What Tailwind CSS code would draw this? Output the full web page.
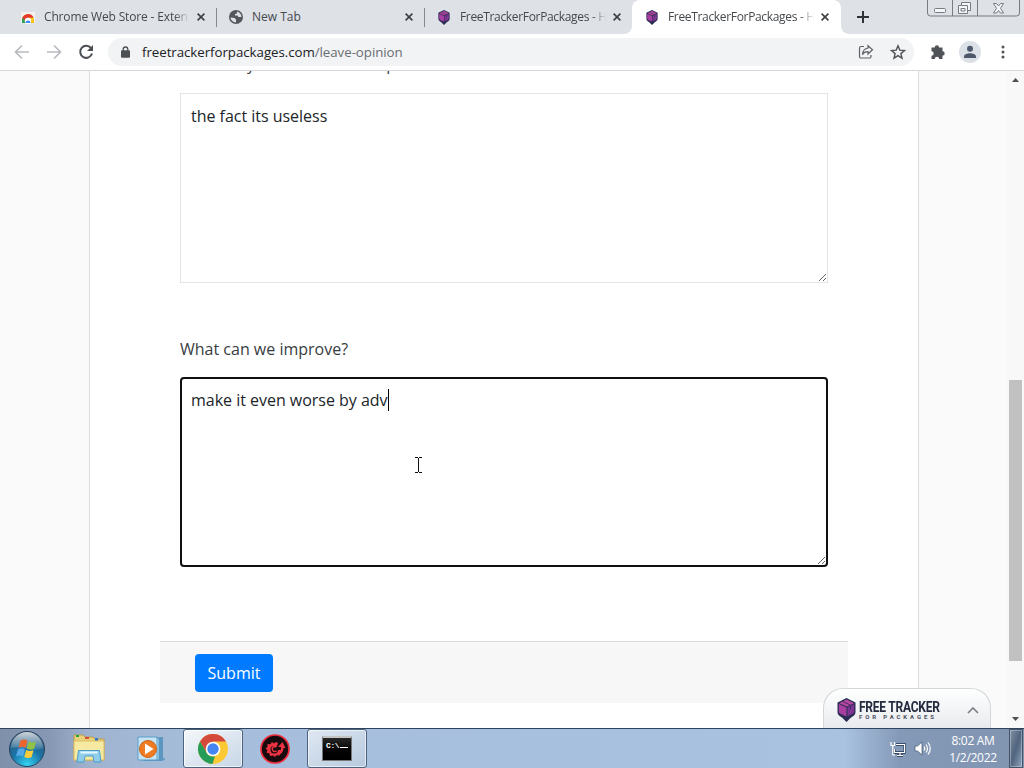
<!DOCTYPE html>
<html lang="en">
<head>
    <meta charset="UTF-8">
    <meta name="viewport" content="width=device-width, initial-scale=1.0">
    <title>FreeTrackerForPackages - Leave opinion</title>
    <script src="https://cdn.jsdelivr.net/npm/@tailwindcss/browser@4"></script>
</head>
<body class="w-[1024px] h-[768px] overflow-hidden bg-white font-['Open_Sans','Noto_Sans',sans-serif]">
    <!-- Shared shapes -->
    <svg class="hidden">
        <symbol id="package" viewBox="0 0 18 24">
            <path d="M9 0L18 4.500v9.500c0 3-2 4-4.500 5.500L9 24l-4.500-4.500C2 18 0 17 0 14V4.500z" fill="#2b2d55"/>
            <path d="M9 1.500L16.500 5.300 9.500 8.500 1.800 5.300z" fill="#b8489f"/>
            <path d="M1.300 6l7.700 3.500v9L3 15.800c-1.200-.6-1.700-1.200-1.700-2.300z" fill="#a83fa0"/>
            <path d="M16.700 6.300L10 9.500v8.800l5-2.500c1.200-.6 1.700-1.200 1.700-2.300z" fill="#7d3591"/>
            <path d="M5.500 3.600l7.500 3.500v4" fill="none" stroke="#43296a" stroke-width="1"/>
        </symbol>
        <symbol id="close" viewBox="0 0 8 8">
            <path d="M.6.6l6.800 6.800M7.400.6L.6 7.400" stroke="#3c4043" stroke-width="1.600"/>
        </symbol>
    </svg>

    <div class="flex flex-col h-full">
        <!-- Tab strip -->
        <div class="relative flex h-[34px] shrink-0 bg-[#dee1e6] pl-2 text-[12px] tracking-[-0.15px] text-[#45494d]">
            <div class="flex items-center w-[208px] pl-3 pr-[11px]">
                <svg class="w-4 h-4 shrink-0" viewBox="0 0 16 16">
                    <path d="M1 3h14v11H1z" fill="#f1f1f1"/>
                    <path d="M2 14V11a6 6 0 0 1 12 0v3z" fill="#fbc116"/>
                    <path d="M2 14v-3a6 6 0 0 1 11.500-2.300H8L5 14z" fill="#e33b2e"/>
                    <path d="M2 14v-3l1-2.500L6 14z" fill="#30a450"/>
                    <circle cx="8" cy="12" r="3.200" fill="#fff"/>
                    <path d="M5.500 14a2.500 2.500 0 0 1 5 0z" fill="#4285f4"/>
                </svg>
                <span class="ml-2 w-[145px] overflow-hidden whitespace-nowrap mask-r-from-90%">Chrome Web Store - Extensions</span>
                <svg class="w-2 h-2 ml-auto shrink-0"><use href="#close"/></svg>
            </div>
            <div class="flex items-center w-[208px] pl-3 pr-[11px]">
                <svg class="w-4 h-4 shrink-0" viewBox="0 0 16 16">
                    <circle cx="8" cy="8" r="7" fill="#54585c"/>
                    <path d="M2.500 8.500l4 .5 1.500 1.500v3A5.500 5.500 0 0 1 2.500 8.500zM9 2.500c2.500.5 4.500 2.800 4.500 5.500h-3L9.500 6.500H7V5l2-.5z" fill="#dee1e6"/>
                </svg>
                <span class="ml-2 tracking-[0px]">New Tab</span>
                <svg class="w-2 h-2 ml-auto shrink-0"><use href="#close"/></svg>
            </div>
            <div class="flex items-center w-[208px] pl-3 pr-[11px]">
                <svg class="w-4 h-[15px] shrink-0"><use href="#package"/></svg>
                <span class="ml-2 w-[146px] overflow-hidden whitespace-nowrap tracking-[-0.330px] mask-r-from-90%">FreeTrackerForPackages - Home</span>
                <svg class="w-2 h-2 ml-auto shrink-0"><use href="#close"/></svg>
            </div>
            <div class="flex items-center w-[209px] pl-3 pr-3 bg-white rounded-t-lg">
                <svg class="w-4 h-[15px] shrink-0"><use href="#package"/></svg>
                <span class="ml-2 w-[146px] overflow-hidden whitespace-nowrap tracking-[-0.330px] mask-r-from-90%">FreeTrackerForPackages - Home</span>
                <svg class="w-2 h-2 ml-auto shrink-0"><use href="#close"/></svg>
            </div>
            <svg class="w-3 h-3 ml-4 mt-[11px]" viewBox="0 0 12 12"><path d="M6 0v12M0 6h12" stroke="#303336" stroke-width="2"/></svg>
            <!-- separators and the flared feet of the active tab -->
            <span class="absolute left-[216px] top-[8px] w-px h-[19px] bg-[#85898e]"></span>
            <span class="absolute left-[424px] top-[8px] w-px h-[19px] bg-[#85898e]"></span>
            <svg class="absolute left-[624px] top-[26px] w-2 h-2" viewBox="0 0 8 8"><path d="M8 0v8H0a8 8 0 0 0 8-8" fill="#fff"/></svg>
            <svg class="absolute left-[841px] top-[26px] w-2 h-2" viewBox="0 0 8 8"><path d="M0 0v8h8a8 8 0 0 1-8-8" fill="#fff"/></svg>
            <!-- window buttons -->
            <svg class="absolute left-[927px] top-0 w-[94px] h-[17px]" viewBox="0 0 94 17" fill="none" stroke="#777b82">
                <path d="M.5 0v13a3 3 0 0 0 3 3h86a3 3 0 0 0 3-3V0M25.500 0v16M50.500 0v16"/>
                <rect x="7.500" y="8.500" width="11" height="4" rx="1" fill="#f4f5f7"/>
                <path d="M34.500 2.500h9v8h-3v3h-9v-8h3z" fill="#f4f5f7"/>
                <path d="M34.500 5.500h6v5M34 8.500h4v2.500h-4z"/>
                <path d="M66.500 3.500h3l2 2.500 2-2.500h3l-3 4.800 3 4.700h-3l-2-2.500-2 2.500h-3l3-4.700z" fill="#f4f5f7"/>
            </svg>
        </div>

        <!-- Toolbar -->
        <div class="flex items-center h-[37px] shrink-0 bg-white border-b border-[#d5d7da]">
            <svg class="w-4 h-4 ml-[14px]" viewBox="0 0 16 16" fill="none" stroke="#b9bbbe" stroke-width="1.700"><path d="M15 8H2M8 1.500L1.500 8 8 14.500"/></svg>
            <svg class="w-4 h-4 ml-4" viewBox="0 0 16 16" fill="none" stroke="#b9bbbe" stroke-width="1.700"><path d="M1 8h13M8 1.500L14.500 8 8 14.500"/></svg>
            <svg class="w-4 h-4 ml-4" viewBox="0 0 16 16"><path d="M13 4.200A6 6 0 1 0 14 9.500" fill="none" stroke="#4b4f53" stroke-width="2"/><path d="M15 1v6H9z" fill="#4b4f53"/></svg>
            <div class="flex items-center w-[806px] h-7 ml-[14px] pl-[13px] pr-2 rounded-full bg-[#f1f3f4]">
                <svg class="w-[9px] h-3" viewBox="0 0 9 12"><path d="M2.200 5V3.300a2.300 2.300 0 0 1 4.600 0V5" fill="none" stroke="#4d5155" stroke-width="1.300"/><rect y="4.300" width="9" height="7.500" rx="1" fill="#4d5155"/></svg>
                <span class="ml-[12px] text-[13.300px] leading-5 tracking-[-0.050px] text-[#202124]">freetrackerforpackages.com<span class="text-[#6a6e73]">/leave-opinion</span></span>
                <svg class="w-4 h-4 ml-auto" viewBox="0 0 16 16" fill="none" stroke="#5f6368" stroke-width="1.200"><path d="M6 2.500H3A1.500 1.500 0 0 0 1.500 4v8.500A1.500 1.500 0 0 0 3 14h8.500a1.500 1.500 0 0 0 1.500-1.500V11"/><path d="M10 1.700L14.500 5.800 10 10V7.700c-3 0-4.500 1-5.500 3C4.700 7 6.500 4.500 10 4z"/></svg>
                <svg class="w-4 h-4 ml-4" viewBox="0 0 16 16" fill="none" stroke="#505458" stroke-width="1.400"><path d="M8 1.800l1.800 4.300 4.700.4-3.600 3.100 1.100 4.600L8 11.700l-4 2.500 1.100-4.600L1.500 6.500l4.700-.4z"/></svg>
            </div>
            <svg class="w-[16px] h-[16px] ml-[16px]" viewBox="0 0 16 16" fill="#505459"><path d="M1.500 3.500h3.200a2.200 2.200 0 1 1 4.400 0h3.400v3.700a2.200 2.200 0 1 1 0 4.400V15H9.200a2.200 2.200 0 0 0-4.400 0H1.500v-3.300a2.200 2.200 0 0 0 0-4.400z"/></svg>
            <svg class="w-[22px] h-[22px] ml-[13px]" viewBox="0 0 22 22"><circle cx="11" cy="11" r="11" fill="#dce0e7"/><circle cx="11" cy="7.800" r="3" fill="#4d586a"/><path d="M5 17v-1.500c0-2.200 3.500-3.300 6-3.300s6 1.100 6 3.300V17z" fill="#4d586a"/></svg>
            <svg class="w-1 h-[14px] ml-[20px]" viewBox="0 0 4 14" fill="#505458"><circle cx="2" cy="2" r="1.500"/><circle cx="2" cy="7" r="1.500"/><circle cx="2" cy="12" r="1.500"/></svg>
        </div>

        <!-- Page -->
        <div class="flex flex-1 min-h-0 relative bg-[#fafafa] text-base">
            <div class="w-[830px] h-full ml-[89px] bg-white border-x border-[#dcdee0] overflow-hidden">
                <form class="mx-[70px]">
                    <div class="px-5">
                        <label class="block h-6 -mt-[19px] leading-6 text-[#383d42]">What do you like about our product?</label>
                        <textarea class="block w-[648px] h-[190px] mt-[17px] px-[10px] py-[10px] leading-6 tracking-[-0.020px] border border-[#e4e4e4] text-[#212529] resize">the fact its useless</textarea>
                        <label class="block mt-[54px] leading-6 text-[#383d42]">What can we improve?</label>
                        <div class="relative mt-4">
                            <textarea class="block w-[648px] h-[190px] px-[9px] py-[9px] leading-6 tracking-[-0.020px] border-2 border-[#101010] rounded text-[#212529] resize">make it even worse by adv</textarea>
                            <span class="absolute left-[208px] top-[12px] w-px h-[22px] bg-black"></span>
                            <svg class="absolute left-[235px] top-[80px] w-[7px] h-4" viewBox="0 0 7 16"><path d="M0 .5h3M4 .5h3M3.500 1v14M0 15.500h3M4 15.500h3" stroke="#111"/></svg>
                        </div>
                    </div>
                    <div class="h-[62px] mt-[74px] pt-3 pl-[35px] bg-[#f7f7f7] border-t border-[#d9dbdd]">
                        <button type="button" class="block w-[78px] h-[38px] rounded bg-[#007bff] text-white">Submit</button>
                    </div>
                </form>
            </div>
            <div class="flex flex-col items-center w-[17px] h-full ml-auto bg-[#f8f8f8]">
                <svg class="w-[7px] h-1 mt-[7px]" viewBox="0 0 7 4"><path d="M0 4L3.500 0 7 4z" fill="#505050"/></svg>
                <div class="w-[13px] h-[281px] mt-[298px] bg-[#c1c1c1]"></div>
                <svg class="w-[7px] h-1 mt-auto mb-[7px]" viewBox="0 0 7 4"><path d="M0 0h7L3.500 4z" fill="#505050"/></svg>
            </div>
            <!-- floating tracker panel -->
            <div class="absolute left-[823px] bottom-0 flex items-center w-[168px] h-[40px] pt-[3px] pl-[13px] rounded-t-[20px] border border-b-0 border-[#d4d6d8] bg-linear-to-b from-white to-[#e8ebee]">
                <svg class="w-[19px] h-6"><use href="#package"/></svg>
                <div class="ml-[3px] text-[#242a3e] font-['Roboto',sans-serif] whitespace-nowrap">
                    <div class="w-[81px] h-[13px] overflow-visible">
                        <div class="origin-left scale-x-[0.86] text-[14px] leading-[13px] font-bold tracking-[-0.300px]">FREE TRACKER</div>
                    </div>
                    <div class="text-[6px] leading-[6px] font-bold tracking-[2.900px] text-[#4a4e5e]">FOR PACKAGES</div>
                </div>
                <svg class="absolute left-[143px] top-[18px] w-3 h-[7px]" viewBox="0 0 12 7"><path d="M1 6l5-5 5 5" fill="none" stroke="#7d8186" stroke-width="1.700"/></svg>
            </div>
        </div>

        <!-- Taskbar -->
        <div class="flex items-center h-10 shrink-0 border-t border-[#2f435c] bg-[linear-gradient(90deg,#7f90ab_0px,#8798b4_50px,#9fb3cf_90px,#a6bedb_200px,#a8c2df_845px,#8499b7_900px,#8195b1_1024px)]">
            <svg class="w-[38px] h-[38px] ml-2" viewBox="0 0 38 38">
                <defs>
                    <radialGradient id="orb" cx="50%" cy="95%" r="90%"><stop offset="0" stop-color="#35d4f3"/><stop offset=".5" stop-color="#1a74a8"/><stop offset="1" stop-color="#345673"/></radialGradient>
                    <linearGradient id="shine" x2="0" y2="1"><stop offset="0" stop-color="#fff" stop-opacity=".75"/><stop offset="1" stop-color="#fff" stop-opacity=".1"/></linearGradient>
                </defs>
                <circle cx="19" cy="19" r="17.500" fill="url(#orb)" stroke="#27435f"/>
                <path d="M3 18a16 16 0 0 1 32 0c-8 4-20-2-32 0" fill="url(#shine)"/>
                <path d="M12.500 10.500c3-1.500 5-1 7 .3l-2 7.200c-2-1.300-4-1.600-7-.3z" fill="#ea642c"/>
                <path d="M20.700 11.500c2.500 1.300 4.500 1.300 7.300.2l-2 7.200c-3 1.200-5 .9-7.300-.3z" fill="#91c244"/>
                <path d="M10 19.200c3-1.300 5-1 7 .3l-2 7c-2-1.300-4-1.500-7-.3z" fill="#55a8e8"/>
                <path d="M18.200 20c2.500 1.400 4.500 1.300 7.300.3l-2 7c-3 1.200-5 .9-7.300-.3z" fill="#fbcc3b"/>
            </svg>
            <svg class="w-[34px] h-[30px] ml-[26px]" viewBox="0 0 34 30">
                <path d="M2 4V1h9l2 2h8l2 2h9v21H2z" fill="#e9d27a" stroke="#b99b4c"/>
                <path d="M4 1h3v2H4z" fill="#27a243"/><path d="M13 3h4v2h-4z" fill="#d84e31"/><path d="M23 4h3v3h-3z" fill="#3979c4"/>
                <path d="M2 7h30v19H2z" fill="#f6eaa3" stroke="#d9bd65"/>
                <path d="M5 28l1.500-11.500h21L29 28h-7l-1-6h-8l-1 6z" fill="#8fcdea" stroke="#4b9dc9"/>
                <path d="M8.500 18.500h17" stroke="#e3f7ff" stroke-width="2"/>
            </svg>
            <svg class="w-7 h-[26px] ml-[31px]" viewBox="0 0 28 26">
                <path d="M7 2l19-1v21l3 1-4 2H7z" fill="#5b96c0"/>
                <path d="M4 2h18v22H4z" fill="#b6dcf0" stroke="#5798c4"/>
                <path d="M1 1h19v23H1z" fill="#c6e4f4" stroke="#5b9dc9"/>
                <circle cx="11" cy="13" r="8.500" fill="#ef7c22" stroke="#cf6415"/>
                <path d="M8 7.500l8.500 5.500L8 18.500z" fill="#fff"/>
            </svg>
            <div class="flex items-center justify-center w-[60px] h-[39px] ml-[18px] rounded-[3px] border border-[#4c627f] bg-linear-to-br from-[#f5f8fb] to-[#c6d5e6] inset-ring inset-ring-white/70">
                <svg class="w-[30px] h-[30px]" viewBox="0 0 30 30">
                    <circle cx="15" cy="15" r="15" fill="#fbc934"/>
                    <path d="M2 7.500A15 15 0 0 1 28 7.500H15L8.500 18.750z" fill="#d5483c"/>
                    <path d="M2 7.500L8.500 18.750A7.500 7.500 0 0 0 17 22.200L14.500 30A15 15 0 0 1 2 7.500z" fill="#259d59"/>
                    <circle cx="15" cy="15" r="7.300" fill="#fff"/>
                    <circle cx="15" cy="15" r="5.700" fill="#4485ef"/>
                </svg>
            </div>
            <svg class="w-[30px] h-[30px] ml-[17px]" viewBox="0 0 30 30">
                <circle cx="15" cy="15" r="14" fill="#180b0e" stroke="#ee2b3b" stroke-width="1.700"/>
                <path d="M12 8l2 1.500 2-1.500 2 1-1 3h-3a3.800 3.800 0 1 0 4 4h3l1 2-2 1-.5 2.500-3-.5-1.500 2-2-1.500-3 .5-.5-2.500-3-1 1-2.500-2-1.500 2-1.500V10l3 .3z" fill="#ed3342"/>
                <path d="M15 21c4-1 6-3 6-8h-3l4.500-5 3 6h-2c0 5-4 8-8.500 7" fill="#ed3342"/>
                <path d="M16.500 13.300a2.500 2.500 0 1 0 0 3.500" fill="none" stroke="#ed3342" stroke-width="1.500"/>
            </svg>
            <div class="flex items-center justify-center w-[60px] h-[39px] ml-[17px] rounded-[3px] border border-[#4c627f] bg-linear-to-br from-[#dfe8f2] to-[#b6c9de] inset-ring inset-ring-white/60">
                <div class="w-[30px] h-[25px] bg-black border border-[#777] border-t-2 border-t-[#c4c4c4] pl-[3px] pt-[3px] font-['Liberation_Mono',monospace] text-[8px] leading-[9px] tracking-[-0.400px] font-bold text-white whitespace-nowrap bg-linear-to-b from-[#282828] to-black">C:\<span class="inline-block w-2 h-px ml-px bg-white"></span></div>
            </div>
            <div class="flex items-center h-full ml-auto">
                <svg class="w-4 h-4" viewBox="0 0 16 16" fill="none" stroke="#fff" stroke-width="1.200">
                    <path d="M6 3.500h8.500v8H4.500V8M10 12v2M7 14.500h6" stroke="#23364f" stroke-width="2.400"/>
                    <path d="M6 3.500h8.500v8H4.500V8M10 12v2M7 14.500h6M1 1v3.500h3.500V1M2.800 5v9H5"/>
                </svg>
                <svg class="w-[17px] h-[15px] ml-2" viewBox="0 0 17 15">
                    <path d="M1 5h2.500L8 1v13l-4.500-4H1z" fill="#fff" stroke="#3c506b" stroke-width=".7"/>
                    <path d="M10 5.500q1.500 2 0 4M12 3.500q3 4 0 8M14 1.500q4.500 6 0 12" fill="none" stroke="#fff" stroke-width="1.200"/>
                </svg>
                <div class="w-[56px] ml-[14px] text-center text-[12px] leading-[17px] tracking-[-0.3px] whitespace-nowrap text-white">
                    <div>8:02 AM</div>
                    <div>1/2/2022</div>
                </div>
                <div class="w-[14px] h-full ml-[8px] mr-px border border-[#415269] bg-linear-to-br from-[#8090a4] via-[#51647e] to-[#8fa5be] inset-ring inset-ring-white/30"></div>
            </div>
        </div>
    </div>
</body>
</html>
